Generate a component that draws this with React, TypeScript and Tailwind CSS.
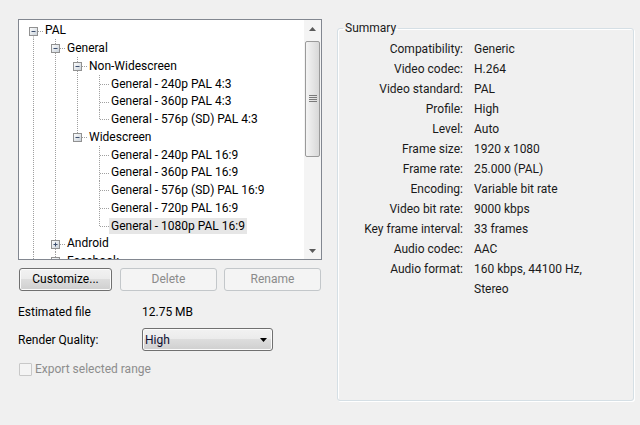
import React from "react";

type TreeRow = {
  label: string;
  guides: boolean[];
  first?: boolean;
  next: boolean;
  expander?: "-" | "+";
  selected?: boolean;
};

const leafs43 = ["General - 240p PAL 4:3", "General - 360p PAL 4:3", "General - 576p (SD) PAL 4:3"];
const leafs169 = [
  "General - 240p PAL 16:9",
  "General - 360p PAL 16:9",
  "General - 576p (SD) PAL 16:9",
  "General - 720p PAL 16:9",
  "General - 1080p PAL 16:9",
];

const rows: TreeRow[] = [
  { label: "PAL", guides: [], first: true, next: true, expander: "-" },
  { label: "General", guides: [true], next: true, expander: "-" },
  { label: "Non-Widescreen", guides: [true, true], next: true, expander: "-" },
  ...leafs43.map((l, i) => ({ label: l, guides: [true, true, true], next: i < leafs43.length - 1 })),
  { label: "Widescreen", guides: [true, true], next: false, expander: "-" },
  ...leafs169.map((l, i) => ({
    label: l,
    guides: [true, true, false],
    next: i < leafs169.length - 1,
    selected: i === leafs169.length - 1,
  })),
  { label: "Android", guides: [true], next: true, expander: "+" },
  { label: "Facebook", guides: [true], next: true, expander: "+" },
];

const summary: [string, string][] = [
  ["Compatibility:", "Generic"],
  ["Video codec:", "H.264"],
  ["Video standard:", "PAL"],
  ["Profile:", "High"],
  ["Level:", "Auto"],
  ["Frame size:", "1920 x 1080"],
  ["Frame rate:", "25.000 (PAL)"],
  ["Encoding:", "Variable bit rate"],
  ["Video bit rate:", "9000 kbps"],
  ["Key frame interval:", "33 frames"],
  ["Audio codec:", "AAC"],
  ["Audio format:", "160 kbps, 44100 Hz,"],
  ["", "Stereo"],
];

const H = 17.75;

function Guide({ on }: { on: boolean }) {
  return (
    <svg width="22" height={H} className="shrink-0">
      {on && <line x1="11.5" y1="0" x2="11.5" y2={H} stroke="#a0a0a0" strokeDasharray="1 1" />}
    </svg>
  );
}

function Connector({ row }: { row: TreeRow }) {
  const c = 9.5;
  return (
    <svg width="22" height={H} className="shrink-0">
      <line x1="11.5" y1={row.first ? c : 0} x2="11.5" y2={row.next ? H : c} stroke="#a0a0a0" strokeDasharray="1 1" />
      <line x1="12" y1={c} x2={row.expander ? 22 : 21} y2={c} stroke="#a0a0a0" strokeDasharray="1 1" />
      {row.expander && (
        <>
          <defs>
            <linearGradient id="exp" x1="0" y1="0" x2="1" y2="1">
              <stop offset="0" stopColor="#ffffff" />
              <stop offset="1" stopColor="#c8d0d8" />
            </linearGradient>
          </defs>
          <rect x="7.5" y="5.5" width="8" height="8" fill="url(#exp)" stroke="#919191" />
          <line x1="9.5" y1={c} x2="13.5" y2={c} stroke="#3d4f6e" />
          {row.expander === "+" && <line x1="11.5" y1="7.5" x2="11.5" y2="11.5" stroke="#3d4f6e" />}
        </>
      )}
    </svg>
  );
}

function Tree() {
  return (
    <div className="flex h-[241px] border border-[#828790] bg-white">
      <div className="flex-1 overflow-hidden pl-[3px] pt-[1.5px]">
        {rows.map((r) => (
          <div key={r.label} className="flex items-center" style={{ height: H }}>
            {r.guides.map((g, i) => (
              <Guide key={i} on={g} />
            ))}
            <Connector row={r} />
            <span
              className={
                "-ml-[1px] whitespace-nowrap px-[2px] leading-[16px] " + (r.selected ? "bg-[#e6e6e6]" : "")
              }
            >
              {r.label}
            </span>
          </div>
        ))}
      </div>
      <div className="flex w-[17px] flex-col bg-[#f4f4f4]">
        <div className="flex h-[17px] items-center justify-center">
          <svg width="7" height="4">
            <path d="M0 4 L3.5 0 L7 4 Z" fill="#5a5a5a" />
          </svg>
        </div>
        <div className="mx-[1px] mt-[4px] flex h-[116px] items-center justify-center rounded-[2px] border border-[#9a9a9a] bg-linear-to-r from-[#f4f4f4] to-[#d8d8d8]">
          <svg width="8" height="8">
            <path d="M0 0.5 H8 M0 2.5 H8 M0 4.5 H8 M0 6.5 H8" stroke="#7a7a7a" />
          </svg>
        </div>
        <div className="flex-1" />
        <div className="flex h-[17px] items-center justify-center">
          <svg width="7" height="4">
            <path d="M0 0 L7 0 L3.5 4 Z" fill="#5a5a5a" />
          </svg>
        </div>
      </div>
    </div>
  );
}

function Button({ label, disabled, w }: { label: string; disabled?: boolean; w: string }) {
  return (
    <button
      type="button"
      className={
        "h-[23px] rounded-[3px] border text-center leading-[21px] " +
        w +
        (disabled
          ? " border-[#c3c7ca] bg-[#f4f4f4] text-[#8b8b8b]"
          : " border-[#707070] bg-[linear-gradient(#f2f2f2,#ebebeb_50%,#dddddd_50%,#cfcfcf)] text-black shadow-[inset_0_0_0_1px_#fbfbfb]")
      }
    >
      {label}
    </button>
  );
}

export default function App() {
  return (
    <div className="flex h-[425px] w-[640px] bg-[#f0f0f0] pl-[18px] pt-[19px] font-['Roboto',sans-serif] text-[12px] text-black">
      <div className="flex w-[304px] flex-col">
        <Tree />
        <div className="mt-[8px] flex">
          <div className="ml-[1px]">
            <Button label="Customize..." w="w-[93px]" />
          </div>
          <div className="ml-[8px]">
            <Button label="Delete" w="w-[97px]" disabled />
          </div>
          <div className="ml-[7px]">
            <Button label="Rename" w="w-[97px]" disabled />
          </div>
        </div>
        <div className="mt-[13px] flex h-[16px] items-center">
          <span className="w-[124px]">Estimated file</span>
          <span>12.75 MB</span>
        </div>
        <div className="mt-[8px] flex items-center">
          <span className="w-[124px]">Render Quality:</span>
          <div className="flex h-[23px] w-[131px] items-center justify-between rounded-[3px] border border-[#707070] bg-[linear-gradient(#f2f2f2,#ebebeb_50%,#dddddd_50%,#cfcfcf)] pl-[2px] pr-[5px] shadow-[inset_0_0_0_1px_#fbfbfb]">
            <span className="text-[#101030]">High</span>
            <svg width="7" height="4">
              <path d="M0 0 L7 0 L3.5 4 Z" fill="#000" />
            </svg>
          </div>
        </div>
        <div className="mt-[11px] flex items-center">
          <div className="ml-[1px] h-[13px] w-[13px] rounded-[1px] border border-[#c8c8c8] bg-[#f4f4f4]" />
          <span className="ml-[3px] leading-[14px] text-[#8d8d8d]">Export selected range</span>
        </div>
      </div>
      <fieldset className="mt-[1px] ml-[15px] h-[381px] w-[297px] rounded-[3px] border border-[#d5dfe5] p-0 shadow-[1px_1px_0_#ffffff,inset_1px_1px_0_#ffffff]">
        <legend className="ml-[5px] px-[2px] leading-[16px] text-[#1a1a1a]">Summary</legend>
        <div className="grid grid-cols-[125px_auto] gap-x-[11px] pt-[3px] leading-[20px] text-[#1a1a1a]">
          {summary.map(([k, v], i) => (
            <React.Fragment key={i}>
              <span className="text-right">{k}</span>
              <span>{v}</span>
            </React.Fragment>
          ))}
        </div>
      </fieldset>
    </div>
  );
}
